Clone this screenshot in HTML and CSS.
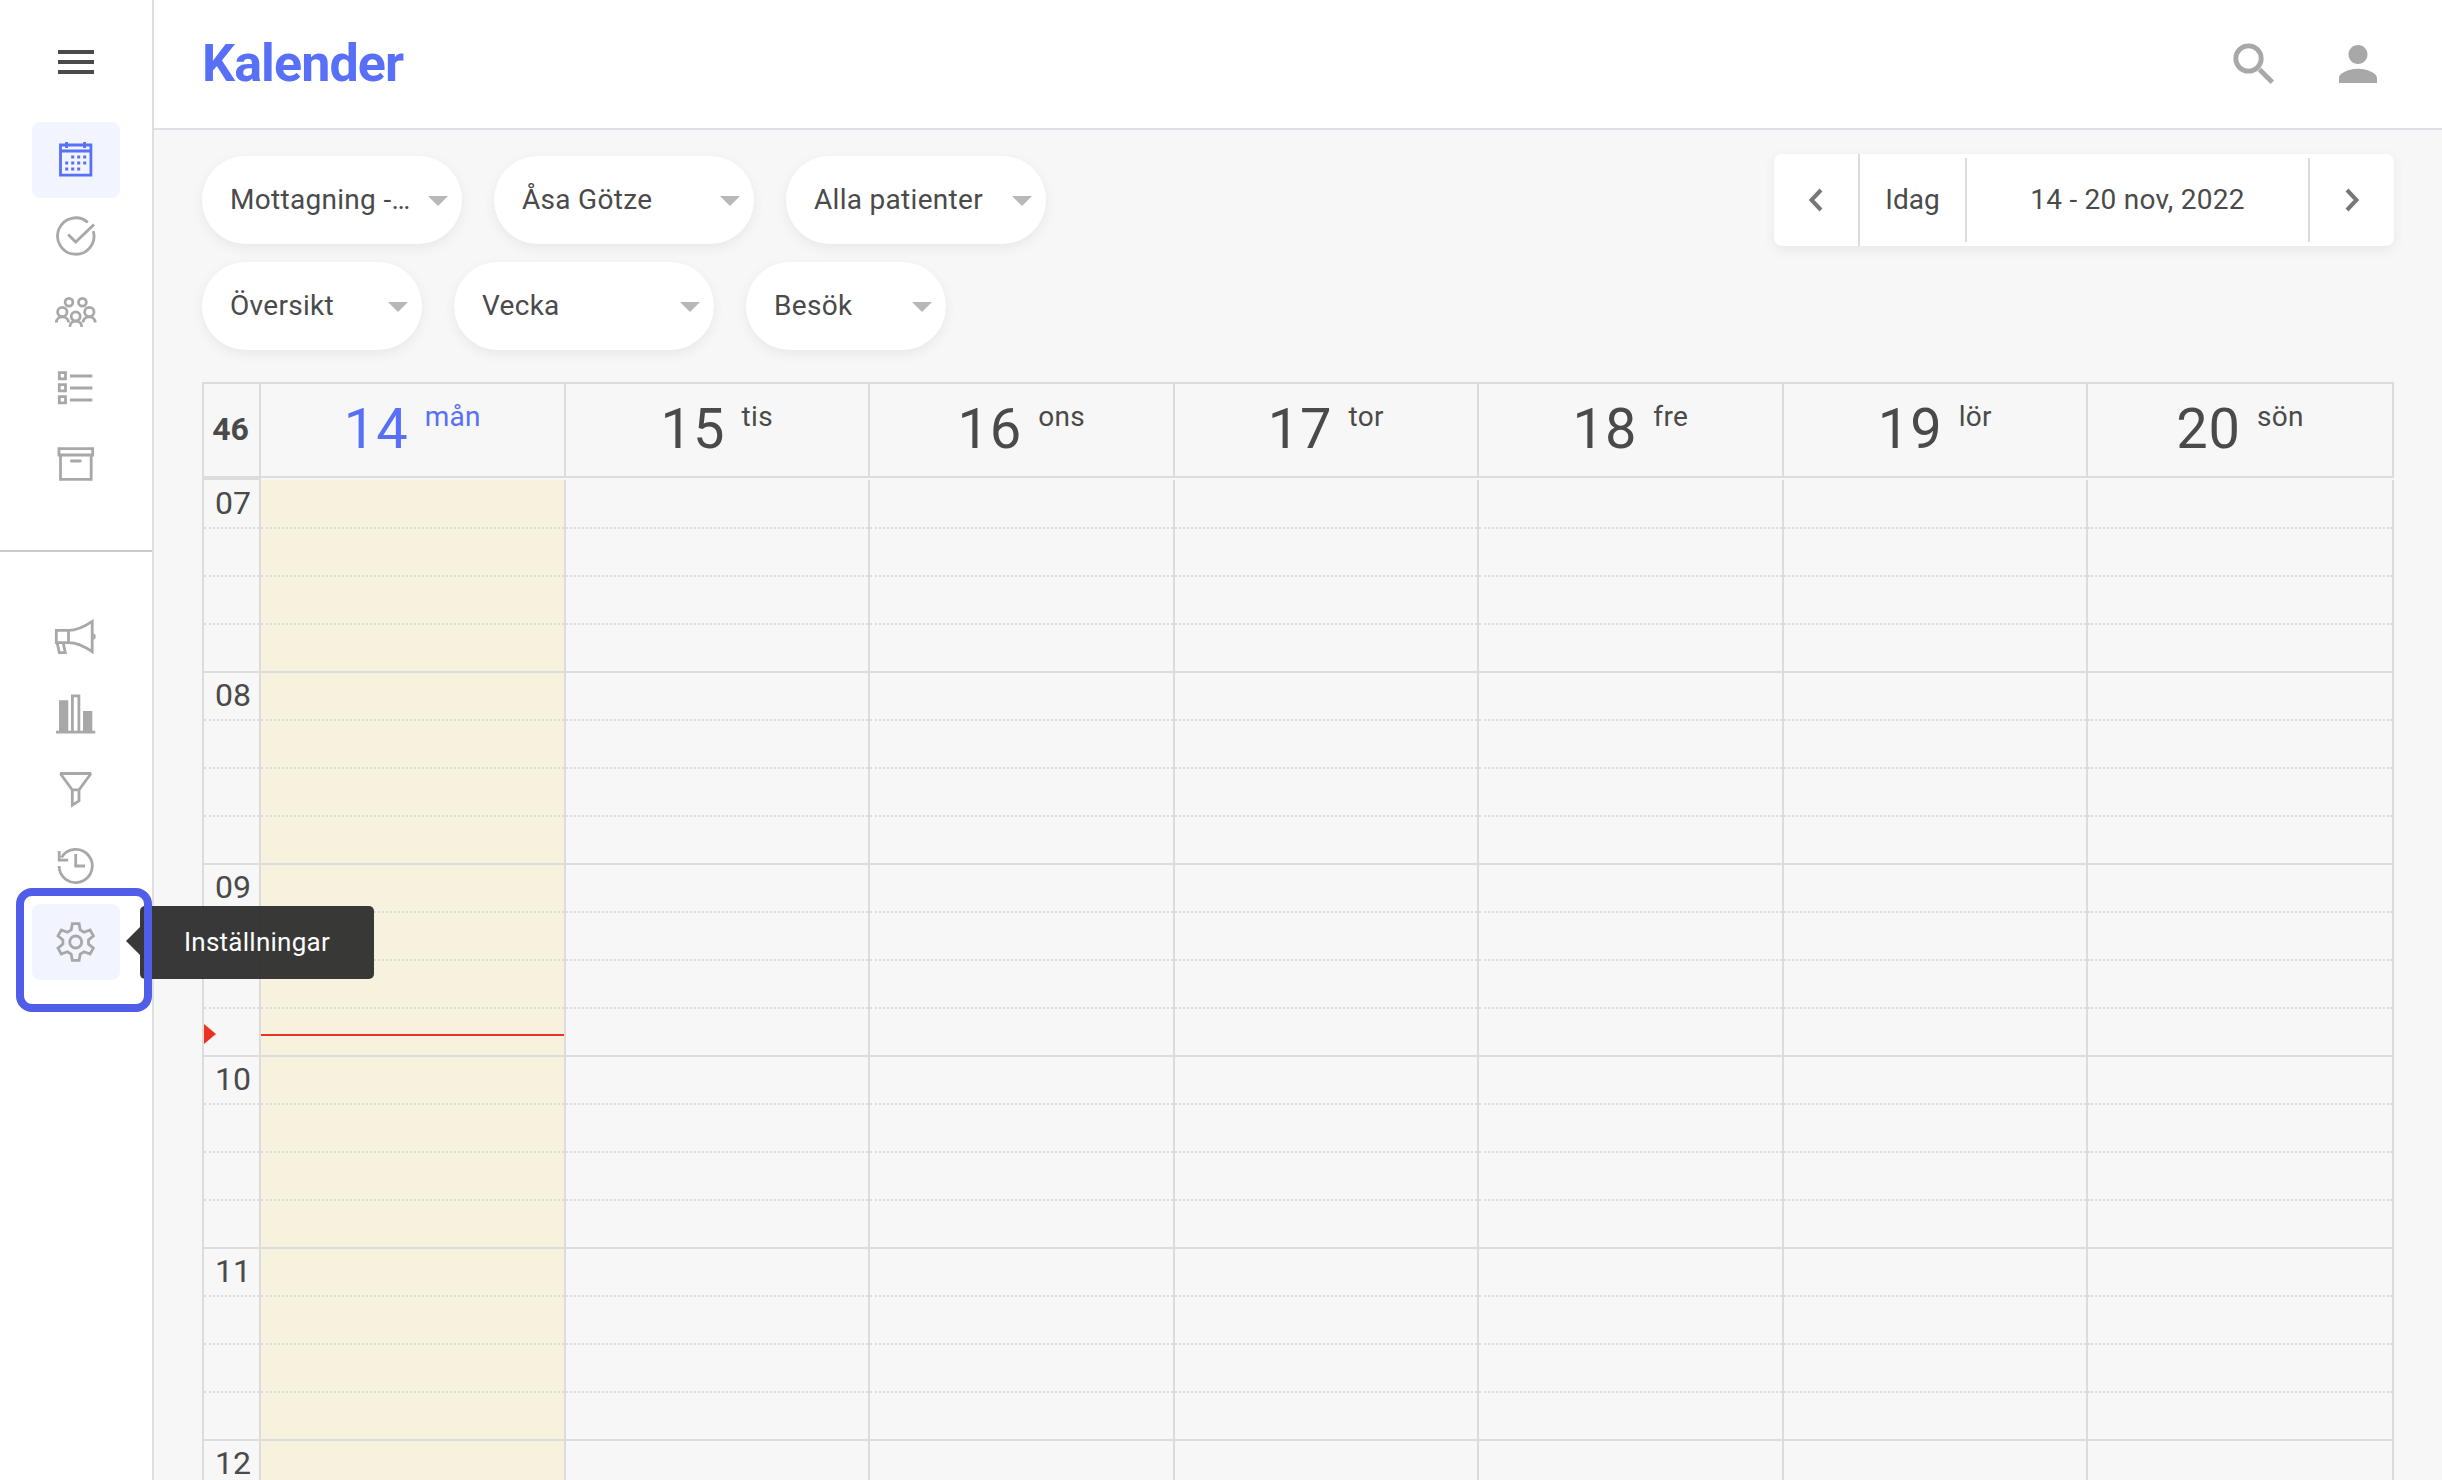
FILE: index.html
```html
<!DOCTYPE html>
<html lang="sv">
<head>
    <meta charset="UTF-8">
    <meta name="viewport" content="width=device-width, initial-scale=1.0">
    <title>Kalender</title>
    <link rel="stylesheet" href="styles.css">
</head>
<body>
    <nav class="sidebar">
        <button class="menu-btn" aria-label="Meny"><span></span><span></span><span></span></button>

        <div class="nav-group">
            <a class="nav-item active">
                <svg class="icon" viewBox="0 0 44 44">
                    <path d="M6.5 7h30.4v30.2H6.5zM6.5 13h30.4M12.6 4v6M30.6 4v6"/>
                    <path class="dots" d="M17.2 17.5h3v3h-3zM23.2 17.5h3v3h-3zM29.2 17.5h3v3h-3zM11.2 23.5h3v3h-3zM17.2 23.5h3v3h-3zM23.2 23.5h3v3h-3zM29.2 23.5h3v3h-3zM11.2 29.5h3v3h-3zM17.2 29.5h3v3h-3zM23.2 29.5h3v3h-3z"/>
                </svg>
            </a>
            <a class="nav-item">
                <svg class="icon" viewBox="0 0 44 44">
                    <path d="M33.8 8.4A18.2 18.2 0 1 0 39.3 17.2M14.2 20.5l7.5 7.5L40 10.4"/>
                </svg>
            </a>
            <a class="nav-item">
                <svg class="icon" viewBox="0 0 44 44">
                    <circle cx="15" cy="12.2" r="3.9"/>
                    <circle cx="28.4" cy="12.2" r="3.9"/>
                    <circle cx="8.3" cy="22" r="4.7"/>
                    <circle cx="35.3" cy="22" r="4.7"/>
                    <circle cx="21.7" cy="26.3" r="4.5"/>
                    <path d="M2.3 32.5c.4-7.4 11.8-7.6 12.2 0M29 32.5c.4-7.4 11.8-7.6 12.2 0M15.9 36.9c.2-7.8 11.6-7.8 11.8 0"/>
                </svg>
            </a>
            <a class="nav-item">
                <svg class="icon" viewBox="0 0 44 44">
                    <path d="M5.3 6.7h6.2v6.2H5.3zM5.3 18.7h6.2v6.2H5.3zM5.3 30.7h6.2v6.2H5.3zM16 10h22.3M16 22h22.3M16 34h22.3"/>
                </svg>
            </a>
            <a class="nav-item">
                <svg class="icon" viewBox="0 0 44 44">
                    <path d="M5 6.7h33.7v6.3H5zM6.5 13v24.3h30.7V13"/>
                    <path stroke-linecap="round" d="M17.3 19h9"/>
                </svg>
            </a>
        </div>

        <div class="nav-group nav-secondary">
            <a class="nav-item">
                <svg class="icon" viewBox="0 0 44 44">
                    <path d="M2.3 14.4h12.2v12.2H2.3zM14.5 14.4C23 14.4 30 11 38.2 5.4v30.3C30 30 23 26.6 14.5 26.6M3.2 27l2.1 9.6h6L9.2 27"/>
                    <path class="dots" d="M39.3 17.3a3.3 3.3 0 0 1 0 6.4z"/>
                </svg>
            </a>
            <a class="nav-item">
                <svg class="icon" viewBox="0 0 44 44">
                    <path class="dots" d="M5 8.2h9.3v31H5zM29 19h9.3v20H29z"/>
                    <path d="M18.4 39V3.8h6.5V39M2 40.2h39.3"/>
                </svg>
            </a>
            <a class="nav-item">
                <svg class="icon" viewBox="0 0 44 44">
                    <path d="M6 5.5h31.3M6.3 5.5L18.2 21.8H25L37 5.5M18.3 21.8v15.4l6.7-4.4v-11"/>
                </svg>
            </a>
            <a class="nav-item">
                <svg class="icon" viewBox="0 0 44 44">
                    <path d="M5.1 22A16.6 16.6 0 1 0 7.5 13.4M5.2 7v9.2h9M21.7 10v12H31"/>
                </svg>
            </a>
            <a class="nav-item hovered">
                <svg class="icon" viewBox="0 0 44 44">
                    <circle cx="21.7" cy="22" r="6"/>
                    <path d="M18.3 3.7h6.8l1.1 6.3 3.8 2.3 6.1-2.3 3.3 5.9-4.9 4.1v4l4.9 4.1-3.3 5.9-6.1-2.3-3.8 2.3-1.1 6.3h-6.8L17.2 34l-3.8-2.3L7.3 34 4 28.1 8.9 24v-4L4 15.9 7.3 10l6.1 2.3 3.8-2.3z"/>
                </svg>
                <span class="tooltip">Inställningar</span>
                <span class="highlight"></span>
            </a>
        </div>
    </nav>

    <main class="main">
        <header class="header">
            <h1>Kalender</h1>
            <div class="header-actions">
                <svg class="search-icon" viewBox="0 0 42 42">
                    <circle cx="15.5" cy="15.5" r="12.7"/>
                    <path d="M26.5 26.5L39.3 39.3"/>
                </svg>
                <svg class="user-icon" viewBox="4 4 16 16">
                    <path d="M12 12c2.21 0 4-1.79 4-4s-1.79-4-4-4-4 1.79-4 4 1.79 4 4 4zm0 2c-2.67 0-8 1.34-8 4v2h16v-2c0-2.66-5.33-4-8-4z"/>
                </svg>
            </div>
        </header>

        <div class="toolbar">
            <div class="filters">
                <div class="filter-row">
                    <div class="select">Mottagning -…</div>
                    <div class="select">Åsa Götze</div>
                    <div class="select">Alla patienter</div>
                </div>
                <div class="filter-row">
                    <div class="select select-md">Översikt</div>
                    <div class="select">Vecka</div>
                    <div class="select select-sm">Besök</div>
                </div>
            </div>
            <div class="date-nav">
                <div class="date-arrow date-prev"><svg viewBox="0 0 16 24"><path d="M13 2L3.5 12 13 22"/></svg></div>
                <div class="date-today"><span>Idag</span></div>
                <div class="date-range"><span>14 - 20 nov, 2022</span></div>
                <div class="date-arrow"><svg viewBox="0 0 16 24"><path d="M3 2l9.5 10L3 22"/></svg></div>
            </div>
        </div>

        <div class="calendar">
            <div class="cal-head">
                <div class="week">46</div>
                <div class="day today"><b>14</b><i>mån</i></div>
                <div class="day"><b>15</b><i>tis</i></div>
                <div class="day"><b>16</b><i>ons</i></div>
                <div class="day"><b>17</b><i>tor</i></div>
                <div class="day"><b>18</b><i>fre</i></div>
                <div class="day"><b>19</b><i>lör</i></div>
                <div class="day"><b>20</b><i>sön</i></div>
            </div>
            <div class="cal-body" id="cal-body"></div>
        </div>
    </main>

    <script>
        const body = document.getElementById('cal-body');
        const hours = ['07', '08', '09', '10', '11', '12'];

        // first column holds the hour labels, the rest are the days
        for (let col = 0; col < 8; col++) {
            let html = '';
            hours.forEach(hour => {
                html += '<div class="slot">' + (col === 0 ? hour : '') + '</div>';
                // the day view is cut off right after 12
                if (hour !== '12') {
                    html += '<div class="slot"></div><div class="slot"></div><div class="slot last"></div>';
                }
            });
            if (col === 0) html += '<div class="now-arrow"></div>';
            if (col === 1) html += '<div class="now-line"></div>';

            const column = document.createElement('div');
            column.className = col === 0 ? 'column times' : col === 1 ? 'column current' : 'column';
            column.innerHTML = html;
            body.appendChild(column);
        }
    </script>
</body>
</html>
```

FILE: styles.css
```css
* {
    box-sizing: border-box;
}
body {
    margin: 0;
    height: 100vh;
    display: flex;
    font-family: Roboto, Arial, sans-serif;
    font-size: 28px;
    color: #4a4a4a;
    background: #f7f7f7;
}

/* Sidebar */
.sidebar {
    width: 154px;
    flex: none;
    background: #fff;
    border-right: 2px solid #dfdfdf;
}
.menu-btn {
    display: flex;
    flex-direction: column;
    gap: 6px;
    width: 36px;
    margin: 50px 0 48px 58px;
    padding: 0;
    border: none;
    background: none;
}
.menu-btn span {
    height: 4px;
    background: #4a4a4a;
}
.nav-group {
    display: flex;
    flex-direction: column;
    align-items: center;
    padding-bottom: 48px;
}
.nav-secondary {
    border-top: 2px solid #cbcbcb;
    padding-top: 48px;
}
.nav-item {
    position: relative;
    display: flex;
    align-items: center;
    justify-content: center;
    width: 88px;
    height: 76px;
    border-radius: 8px;
    color: #a8a8a8;
}
.nav-item.active {
    color: #5770f7;
    background: #f2f5ff;
}
.nav-item.hovered {
    background: #f2f5ff;
}
.icon {
    width: 44px;
    height: 44px;
    fill: none;
    stroke: currentColor;
    stroke-width: 2.8;
}
.icon .dots {
    fill: currentColor;
    stroke: none;
}
.tooltip {
    position: absolute;
    left: 108px;
    top: 2px;
    z-index: 2;
    width: 234px;
    height: 73px;
    line-height: 72px;
    text-align: center;
    font-size: 26px;
    letter-spacing: 0.25px;
    color: #fff;
    background: rgba(45, 45, 45, 0.95);
    border-radius: 5px;
}
.tooltip::before {
    content: "";
    position: absolute;
    left: -14px;
    top: 21px;
    border: 14px solid transparent;
    border-left: none;
    border-right-color: #393939;
}
.highlight {
    position: absolute;
    left: -16px;
    top: -16px;
    z-index: 3;
    width: 136px;
    height: 124px;
    border: 8px solid #505de8;
    border-radius: 16px;
}

/* Header */
.main {
    flex: 1;
    min-width: 0;
    height: 100vh;
    overflow: hidden;
}
.header {
    display: flex;
    align-items: center;
    justify-content: space-between;
    height: 130px;
    padding: 0 65px 0 48px;
    background: #fff;
    border-bottom: 2px solid #dde1e6;
}
.header h1 {
    margin: 0 0 1px;
    font-size: 52px;
    font-weight: 700;
    letter-spacing: -0.9px;
    color: #5770f7;
}
.header-actions {
    display: flex;
    align-items: center;
    gap: 64px;
}
.search-icon {
    width: 42px;
    height: 42px;
    fill: none;
    stroke: #a8a8a8;
    stroke-width: 4.8;
}
.user-icon {
    width: 38px;
    height: 38px;
    fill: #a8a8a8;
}

/* Filters and date navigation */
.toolbar {
    display: flex;
    justify-content: space-between;
    align-items: flex-start;
    padding: 24px 48px 32px;
}
.filters {
    display: flex;
    flex-direction: column;
    gap: 18px;
    padding-top: 2px;
}
.filter-row {
    display: flex;
    gap: 32px;
}
.select {
    display: flex;
    align-items: center;
    justify-content: space-between;
    width: 260px;
    height: 88px;
    padding: 0 14px 2px 28px;
    white-space: nowrap;
    letter-spacing: 0.3px;
    background: #fff;
    border-radius: 44px;
    box-shadow: 0 4px 12px rgba(60, 70, 110, 0.08);
}
.select-md {
    width: 220px;
}
.select-sm {
    width: 200px;
}
.select::after {
    content: "";
    margin-top: 3px;
    border: 10px solid transparent;
    border-top-color: #b8b8b8;
    border-bottom: none;
}
.date-nav {
    display: flex;
    align-items: center;
    width: 620px;
    height: 92px;
    background: #fff;
    border-radius: 8px;
    box-shadow: 0 4px 12px rgba(60, 70, 110, 0.08);
}
.date-nav > div {
    display: flex;
    align-items: center;
    justify-content: center;
    height: 84px;
    padding-bottom: 2px;
}
.date-nav .date-arrow {
    width: 84px;
    padding: 0;
}
.date-nav .date-prev {
    width: 86px;
    height: 92px;
    border-right: 2px solid #dcdcdc;
}
.date-arrow svg {
    width: 16px;
    height: 24px;
    fill: none;
    stroke: #777;
    stroke-width: 4;
}
.date-today {
    width: 107px;
    border-right: 2px solid #dcdcdc;
}
.date-range {
    flex: 1;
    letter-spacing: 0.25px;
    border-right: 2px solid #dcdcdc;
}

/* Calendar */
.calendar {
    margin: 0 48px;
    border-top: 2px solid #dcdcdc;
    border-left: 2px solid #dcdcdc;
}
.cal-head,
.cal-body {
    display: grid;
    grid-template-columns: 57px repeat(6, 304.5px) 1fr;
}
.cal-head > div {
    height: 94px;
    border-right: 2px solid #dcdcdc;
    border-bottom: 2px solid #dcdcdc;
}
.cal-head .week {
    height: 96px;
    padding: 26px 2px 0 0;
    border-bottom-width: 4px;
    font-size: 32px;
    font-weight: 700;
    text-align: center;
}
.day {
    display: flex;
    justify-content: center;
    gap: 16px;
}
.day b {
    padding-top: 12px;
    font-size: 56px;
    font-weight: 400;
    letter-spacing: 1px;
}
.day i {
    padding-top: 16px;
    font-style: normal;
    letter-spacing: 0.3px;
}
.day.today {
    color: #5770f7;
}
.column {
    position: relative;
    padding-top: 1px;
    border-right: 2px solid #dcdcdc;
}
.slot {
    height: 48px;
    border-bottom: 2px dotted #dcdcdc;
}
.slot.last {
    border-bottom-style: solid;
}
.times .slot {
    padding: 3px 0 0 11px;
    font-size: 32px;
}
.current {
    background: #f7f2de;
}
.now-arrow {
    position: absolute;
    left: 0;
    top: 544px;
    border: 10px solid transparent;
    border-left: 12px solid #ea3323;
    border-right: none;
}
.now-line {
    position: absolute;
    left: 0;
    right: 0;
    top: 554px;
    height: 2px;
    background: #ea3323;
}
```
